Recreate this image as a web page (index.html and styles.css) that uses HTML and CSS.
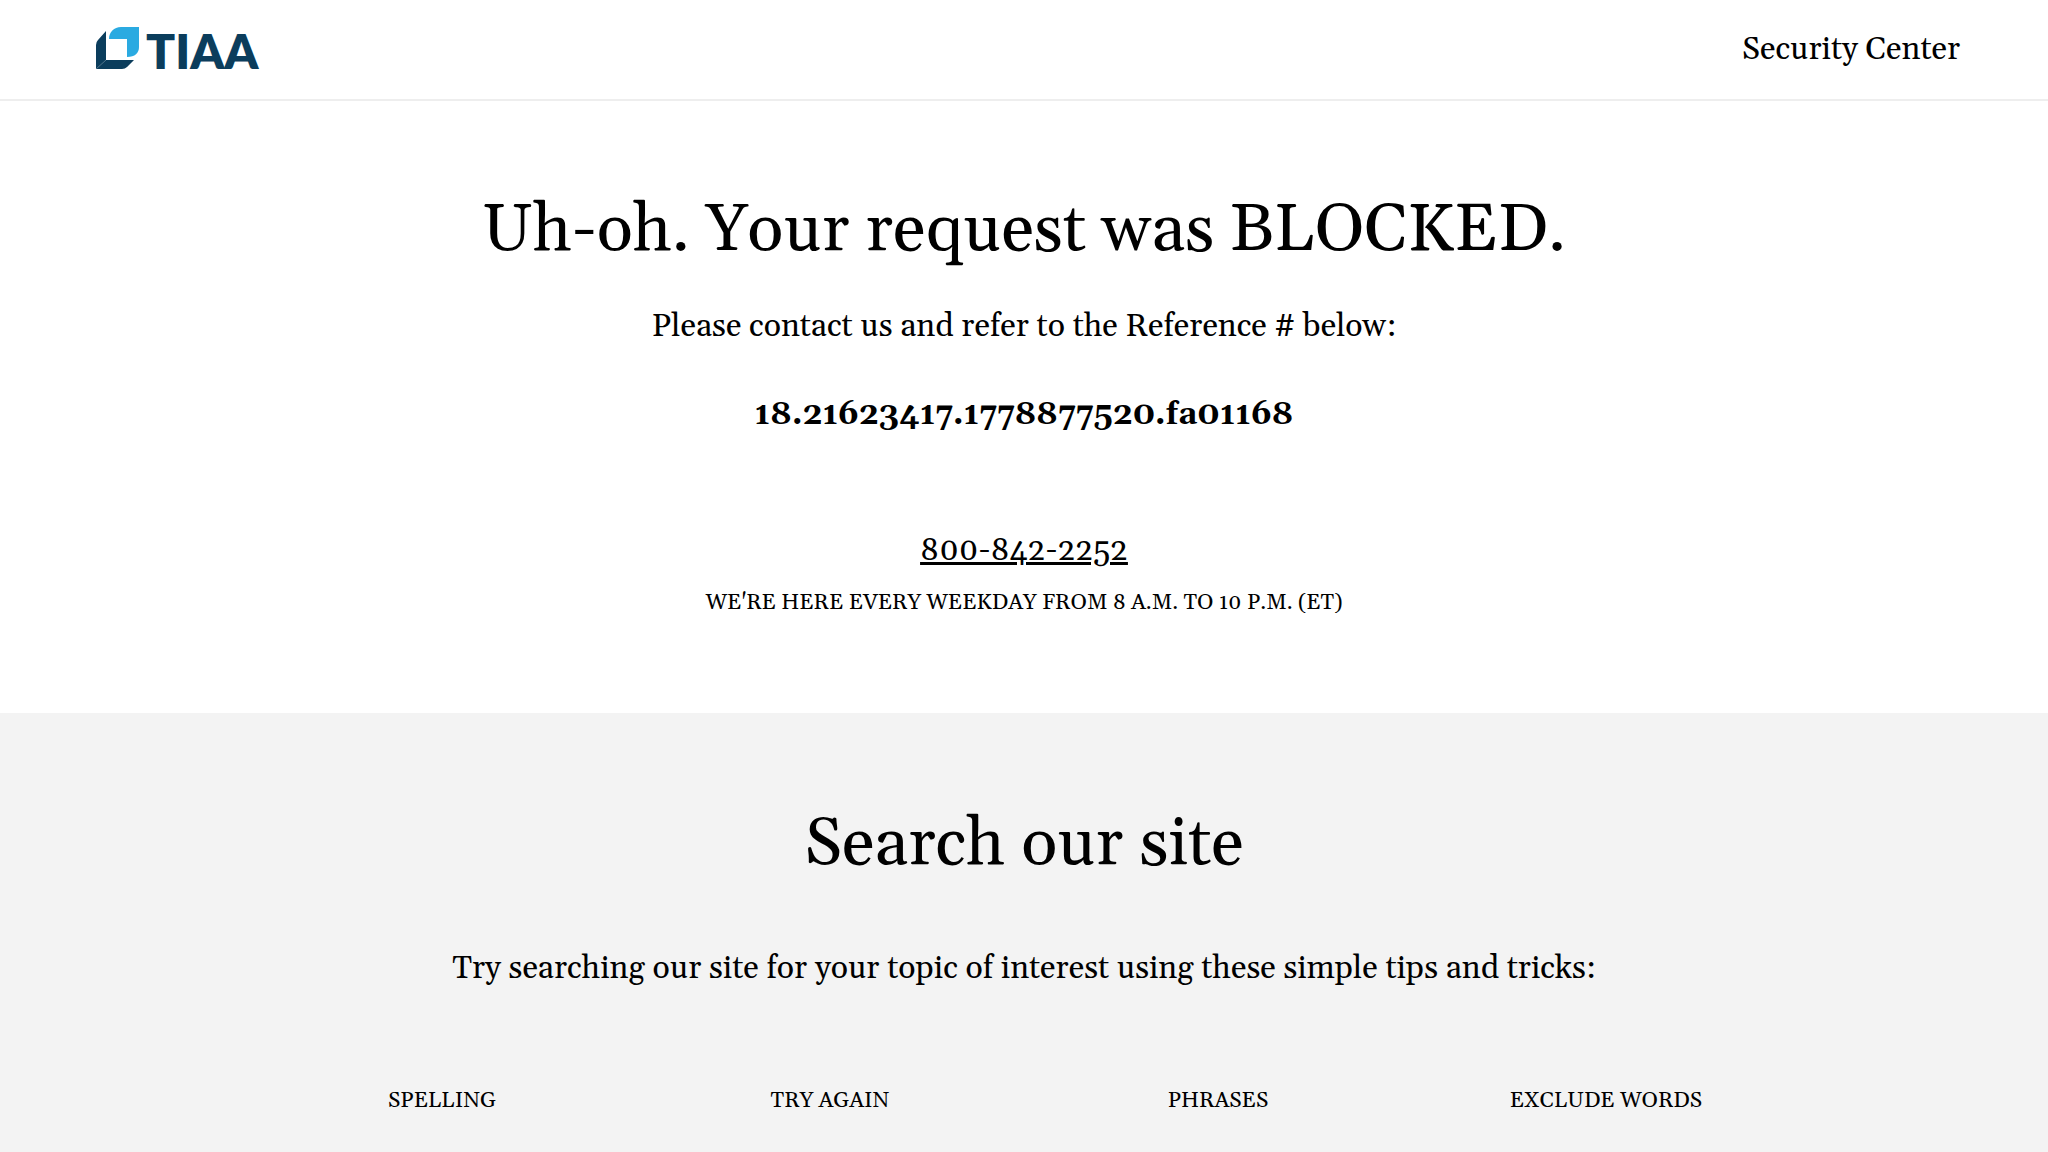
FILE: index.html
```html
<!DOCTYPE html>
<html lang="en">
<head>
    <meta charset="UTF-8">
    <meta name="viewport" content="width=device-width, initial-scale=1.0">
    <title>TIAA - Request Blocked</title>
    <link rel="stylesheet" href="styles.css">
</head>
<body>
    <header class="header">
        <a class="logo" href="#">
            <svg class="logo-mark" viewBox="0 0 44 42" aria-hidden="true">
                <path class="logo-dark" d="M10 4V33H38L31 40Q29 42 26 42H0V18Q0 15 2 13Z"/>
                <path class="logo-light" d="M13 12C13 5 18 0 25 0H43V20C43 26 39 30 31 30V12Z"/>
                <path class="logo-fold" d="M0 42L10 33"/>
            </svg>
            <span class="logo-text">TIAA</span>
        </a>
        <a class="header-link" href="#">Security Center</a>
    </header>

    <main>
        <section class="blocked">
            <h1>Uh-oh. Your request was BLOCKED.</h1>
            <p class="message">Please contact us and refer to the Reference # below:</p>
            <p class="reference">18.21623417.1778877520.fa01168</p>
            <a class="phone" href="tel:800-842-2252">800-842-2252</a>
            <p class="hours">We're here every weekday from 8 a.m. to 10 p.m. (ET)</p>
        </section>

        <section class="search">
            <h2>Search our site</h2>
            <p class="message">Try searching our site for your topic of interest using these simple tips and tricks:</p>
            <!-- Search tips -->
            <div class="tips">
                <h3>Spelling</h3>
                <h3>Try again</h3>
                <h3>Phrases</h3>
                <h3>Exclude words</h3>
            </div>
        </section>
    </main>
</body>
</html>
```
FILE: styles.css
```css
* {
    box-sizing: border-box;
}

body {
    display: flex;
    flex-direction: column;
    min-height: 100vh;
    margin: 0;
    font-family: Georgia, Gelasio, "Liberation Serif", serif;
    font-size: 32px;
    line-height: 40px;
    color: #000;
    background-color: #fff;
}

main {
    display: flex;
    flex-direction: column;
    flex: 1;
}

h1, h2, h3, p {
    margin: 0;
    font-weight: normal;
}

a {
    color: inherit;
}

/* Header */
.header {
    display: flex;
    justify-content: space-between;
    align-items: center;
    padding: 20px 88px 20px 96px;
    border-bottom: 2px solid #eee;
}

.logo {
    display: flex;
    align-items: baseline;
    gap: 6px;
    height: 59px;
    padding-top: 7px;
    text-decoration: none;
}

.logo-mark {
    width: 44px;
    height: 42px;
}

.logo-dark {
    fill: #0b3d5c;
}

.logo-light {
    fill: #2aaae1;
}

.logo-fold {
    stroke: #52758b;
    stroke-width: 1;
}

.logo-text {
    font-family: Lato, sans-serif;
    font-size: 48px;
    line-height: 48px;
    font-weight: 800;
    color: #0b3d5c;
}

.header-link {
    text-decoration: none;
}

/* Blocked message */
.blocked {
    display: flex;
    flex-direction: column;
    align-items: center;
    padding: 90px 24px 94px;
    text-align: center;
}

h1, h2 {
    font-size: 67px;
    line-height: 80px;
}

.blocked .message {
    margin-top: 36px;
}

.reference {
    margin-top: 48px;
    font-weight: bold;
}

.phone {
    margin-top: 96px;
}

.hours, h3 {
    font-size: 22px;
    line-height: 32px;
    text-transform: uppercase;
}

.hours {
    margin-top: 16px;
}

/* Search tips */
.search {
    flex: 1;
    padding: 92px 24px 36px;
    text-align: center;
    background-color: #f3f3f3;
}

.search .message {
    margin-top: 64px;
}

.tips {
    display: grid;
    grid-template-columns: repeat(4, 1fr);
    max-width: 1552px;
    margin: 96px auto 0;
}
```
